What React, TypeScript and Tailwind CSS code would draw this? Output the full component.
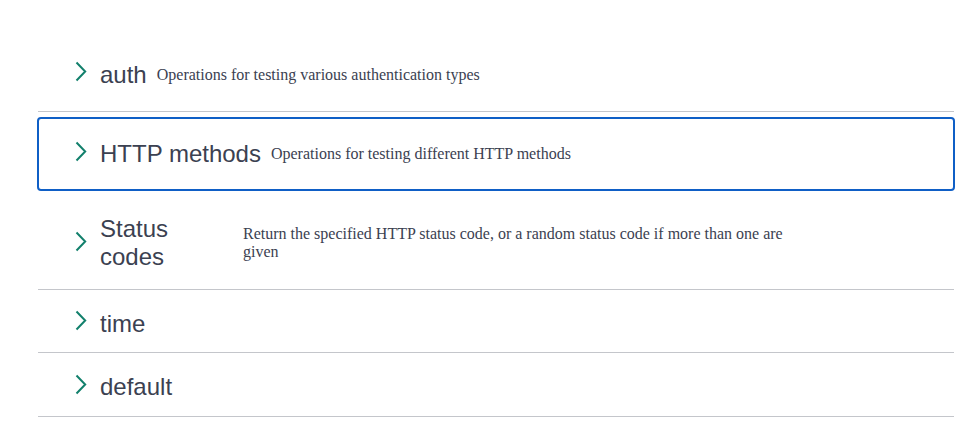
import React from "react";

const Chevron = ({ className = "mb-[6px]" }: { className?: string }) => (
  <svg width="12" height="21" viewBox="0 0 12 21" className={"shrink-0 " + className} fill="none">
    <path d="M1.5 1.5 L10.2 10.5 L1.5 19.5" stroke="#12806c" strokeWidth="2" strokeLinecap="butt" strokeLinejoin="miter" />
  </svg>
);

const Title = ({ children, className = "" }: { children: React.ReactNode; className?: string }) => (
  <span
    className={"text-[24px] leading-[28px] text-[#3b4151] " + className}
    style={{ fontFamily: '"Liberation Sans", Arial, sans-serif' }}
  >
    {children}
  </span>
);

const Desc = ({ children, className = "" }: { children: React.ReactNode; className?: string }) => (
  <span
    className={"pl-[10px] text-[16px] leading-[18px] text-[#3b4151] " + className}
    style={{ fontFamily: '"Liberation Serif", "Times New Roman", serif' }}
  >
    {children}
  </span>
);

export default function App() {
  return (
    <div className="w-[977px] h-[427px] bg-white overflow-hidden">
      <div className="pt-[38px] ml-[38px] mr-[23px] flex flex-col">
        <div className="h-[74px] mb-[5px] border-b border-[#c4c6cb] flex items-center pl-[37px]">
          <Chevron />
          <div className="flex items-center ml-[13px]">
            <Title>auth</Title>
            <Desc>Operations for testing various authentication types</Desc>
          </div>
        </div>
        <div className="h-[74px] mb-[5px] -mx-px border-2 border-[#0f5fc6] rounded-[4px] flex items-center pl-[36px]">
          <Chevron />
          <div className="flex items-center ml-[13px]">
            <Title>HTTP methods</Title>
            <Desc>Operations for testing different HTTP methods</Desc>
          </div>
        </div>
        <div className="h-[94px] mb-[5px] border-b border-[#c4c6cb] flex items-center pl-[37px]">
          <Chevron className="mb-[2px]" />
          <div className="flex items-center ml-[13px]">
            <Title className="w-[133px]">Status codes</Title>
            <Desc className="w-[560px]">
              Return the specified HTTP status code, or a random status code if more than one are given
            </Desc>
          </div>
        </div>
        <div className="h-[58px] mb-[5px] border-b border-[#c4c6cb] flex items-center pl-[37px]">
          <Chevron />
          <div className="flex items-center ml-[13px]">
            <Title>time</Title>
          </div>
        </div>
        <div className="h-[59px] border-b border-[#c4c6cb] flex items-center pl-[37px]">
          <Chevron />
          <div className="flex items-center ml-[13px]">
            <Title>default</Title>
          </div>
        </div>
      </div>
    </div>
  );
}
